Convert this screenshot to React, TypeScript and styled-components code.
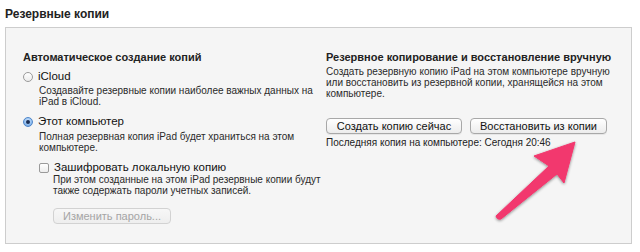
import React from "react";
import styled, { createGlobalStyle } from "styled-components";

const Global = createGlobalStyle`
  html, body { margin: 0; padding: 0; background: #ffffff; }
  body { font-family: "Liberation Sans", Arial, Helvetica, sans-serif; color: #1a1a1a; }
  * { box-sizing: border-box; }
`;

const Page = styled.div`
  position: relative;
  width: 640px;
  height: 252px;
  overflow: hidden;
  padding: 6px 8px 0 5px;
`;

const Title = styled.h1`
  margin: 0;
  font-size: 12px;
  line-height: 16px;
  font-weight: 700;
  color: #222;
`;

const Panel = styled.section`
  margin-top: 5px;
  width: 627px;
  height: 217px;
  background: #f5f5f5;
  border: 1px solid #cdcdcd;
  display: grid;
  grid-template-columns: 303px 1fr;
  padding: 23px 0 0 17px;
`;

const Column = styled.div`
  display: flex;
  flex-direction: column;
  align-items: flex-start;
`;

const Heading = styled.h2`
  margin: 0;
  font-size: 11px;
  line-height: 13px;
  font-weight: 700;
  color: #222;
`;

const Option = styled.label<{ $indent?: number; $gap?: number }>`
  display: flex;
  align-items: center;
  gap: 5px;
  margin-top: ${(p) => p.$gap ?? 8}px;
  margin-left: ${(p) => p.$indent ?? 0}px;
  font-size: 11.5px;
  line-height: 13px;
  color: #111;
`;

const Radio = styled.span<{ $checked?: boolean }>`
  width: 10px;
  height: 10px;
  border-radius: 50%;
  flex: none;
  display: flex;
  align-items: center;
  justify-content: center;
  border: 1px solid ${(p) => (p.$checked ? "#4f86c9" : "#9a9a9a")};
  background: ${(p) =>
    p.$checked
      ? "radial-gradient(circle at 50% 35%, #d3e6fb 0%, #8dbbef 60%, #5d95d6 100%)"
      : "linear-gradient(#ffffff, #ececec)"};
  &::after {
    content: "";
    display: ${(p) => (p.$checked ? "block" : "none")};
    width: 4px;
    height: 4px;
    border-radius: 50%;
    background: #1b2f55;
  }
`;

const Checkbox = styled.span`
  width: 10px;
  height: 10px;
  flex: none;
  border: 1px solid #9a9a9a;
  border-radius: 2px;
  background: linear-gradient(#ffffff, #ededed);
`;

const Desc = styled.p<{ $indent?: number; $gap?: number }>`
  margin: ${(p) => p.$gap ?? 2}px 0 0 ${(p) => p.$indent ?? 0}px;
  font-size: 10px;
  line-height: 11px;
  color: #2a2a2a;
`;

const Button = styled.button<{ $disabled?: boolean; $w: number }>`
  width: ${(p) => p.$w}px;
  height: 16px;
  padding: 0;
  font-family: "Liberation Sans", Arial, sans-serif;
  font-size: 11px;
  line-height: 14px;
  color: ${(p) => (p.$disabled ? "#a5a5a5" : "#111")};
  background: ${(p) =>
    p.$disabled ? "linear-gradient(#f7f7f7, #eeeeee)" : "linear-gradient(#ffffff, #ececec)"};
  border: 1px solid ${(p) => (p.$disabled ? "#d2d2d2" : "#a8a8a8")};
  border-radius: 4px;
  box-shadow: ${(p) => (p.$disabled ? "none" : "0 1px 0 rgba(0,0,0,0.06)")};
`;

const ButtonRow = styled.div`
  display: flex;
  gap: 8px;
  margin-top: 19px;
`;

const Status = styled.p`
  margin: 3px 0 0 0;
  font-size: 10px;
  line-height: 12px;
  color: #222;
`;

const ArrowLayer = styled.svg`
  position: absolute;
  left: 0;
  top: 0;
  pointer-events: none;
`;

export default function App() {
  return (
    <>
      <Global />
      <Page>
        <Title>Резервные копии</Title>
        <Panel>
          <Column>
            <Heading>Автоматическое создание копий</Heading>
            <Option $gap={6}>
              <Radio />
              iCloud
            </Option>
            <Desc $indent={16} $gap={2}>
              Создавайте резервные копии наиболее важных данных на
              <br />
              iPad в iCloud.
            </Desc>
            <Option $gap={8}>
              <Radio $checked />
              Этот компьютер
            </Option>
            <Desc $indent={16} $gap={3}>
              Полная резервная копия iPad будет храниться на этом
              <br />
              компьютере.
            </Desc>
            <Option $indent={16} $gap={8}>
              <Checkbox />
              Зашифровать локальную копию
            </Option>
            <Desc $indent={30} $gap={0}>
              При этом созданные на этом iPad резервные копии будут
              <br />
              также содержать пароли учетных записей.
            </Desc>
            <Desc as="div" $indent={30} $gap={12}>
              <Button $disabled $w={118}>Изменить пароль...</Button>
            </Desc>
          </Column>
          <Column>
            <Heading>Резервное копирование и восстановление вручную</Heading>
            <Desc $gap={2}>
              Создать резервную копию iPad на этом компьютере вручную
              <br />
              или восстановить из резервной копии, хранящейся на этом
              <br />
              компьютере.
            </Desc>
            <ButtonRow>
              <Button $w={136}>Создать копию сейчас</Button>
              <Button $w={137}>Восстановить из копии</Button>
            </ButtonRow>
            <Status>Последняя копия на компьютере: Сегодня 20:46</Status>
          </Column>
        </Panel>
        <ArrowLayer width="640" height="252" viewBox="0 0 640 252">
          <defs>
            <filter id="sh" x="-20%" y="-20%" width="140%" height="140%">
              <feGaussianBlur in="SourceAlpha" stdDeviation="1.6" />
              <feOffset dx="0" dy="1" />
              <feComponentTransfer>
                <feFuncA type="linear" slope="0.45" />
              </feComponentTransfer>
              <feMerge>
                <feMergeNode />
                <feMergeNode in="SourceGraphic" />
              </feMerge>
            </filter>
          </defs>
          <path
            d="M575 142 L534 156 L549 166 L496 216 Q497 220 501 219 L557 174 L564 183 Z"
            fill="#f2386e"
            stroke="#f2386e"
            strokeWidth="1"
            strokeLinejoin="round"
            filter="url(#sh)"
          />
        </ArrowLayer>
      </Page>
    </>
  );
}
